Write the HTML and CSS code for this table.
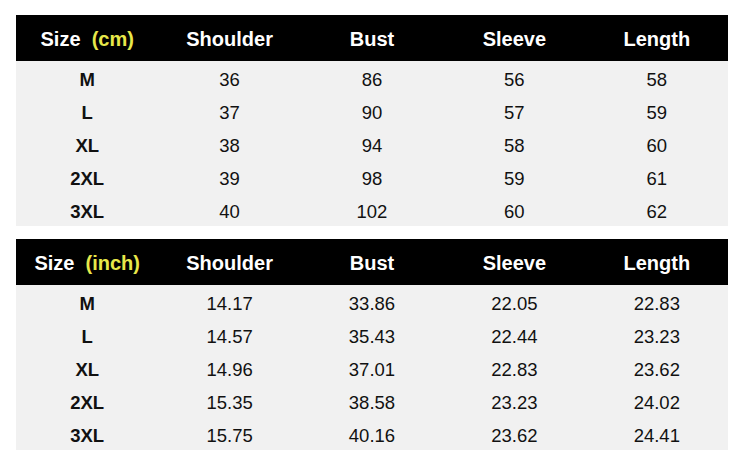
FILE: index.html
```html
<!DOCTYPE html>
<html>
<head>
<meta charset="utf-8">
<link rel="stylesheet" href="styles.css">
</head>
<body>
<div class="page">
  <table class="chart">
    <thead>
      <tr><th>Size&nbsp;&nbsp;<span class="unit">(cm)</span></th><th>Shoulder</th><th>Bust</th><th>Sleeve</th><th>Length</th></tr>
    </thead>
    <tbody>
      <tr><td class="sz">M</td><td>36</td><td>86</td><td>56</td><td>58</td></tr>
      <tr><td class="sz">L</td><td>37</td><td>90</td><td>57</td><td>59</td></tr>
      <tr><td class="sz">XL</td><td>38</td><td>94</td><td>58</td><td>60</td></tr>
      <tr><td class="sz">2XL</td><td>39</td><td>98</td><td>59</td><td>61</td></tr>
      <tr><td class="sz">3XL</td><td>40</td><td>102</td><td>60</td><td>62</td></tr>
    </tbody>
  </table>
  <table class="chart">
    <thead>
      <tr><th>Size&nbsp;&nbsp;<span class="unit">(inch)</span></th><th>Shoulder</th><th>Bust</th><th>Sleeve</th><th>Length</th></tr>
    </thead>
    <tbody>
      <tr><td class="sz">M</td><td>14.17</td><td>33.86</td><td>22.05</td><td>22.83</td></tr>
      <tr><td class="sz">L</td><td>14.57</td><td>35.43</td><td>22.44</td><td>23.23</td></tr>
      <tr><td class="sz">XL</td><td>14.96</td><td>37.01</td><td>22.83</td><td>23.62</td></tr>
      <tr><td class="sz">2XL</td><td>15.35</td><td>38.58</td><td>23.23</td><td>24.02</td></tr>
      <tr><td class="sz">3XL</td><td>15.75</td><td>40.16</td><td>23.62</td><td>24.41</td></tr>
    </tbody>
  </table>
</div>
</body>
</html>
```
FILE: styles.css
```css
html, body {
  margin: 0;
  padding: 0;
  background: #ffffff;
}
.page {
  padding: 15px 0 0 16px;
  display: flex;
  flex-direction: column;
  gap: 13px;
  font-family: "Liberation Sans", Arial, sans-serif;
}
.chart {
  width: 712px;
  border-collapse: collapse;
  table-layout: fixed;
}
.chart th {
  box-sizing: border-box;
  background: #000000;
  color: #ffffff;
  font-weight: bold;
  font-size: 20px;
  height: 46px;
  padding: 3px 0 0 0;
  text-align: center;
}
.chart .unit {
  color: #e8e84a;
}
.chart tbody tr {
  background: #f1f1f1;
}
.chart td {
  box-sizing: border-box;
  height: 33px;
  padding: 4px 0 0 0;
  text-align: center;
  font-size: 18.5px;
  color: #111111;
}
.chart td.sz {
  font-weight: bold;
}
```
